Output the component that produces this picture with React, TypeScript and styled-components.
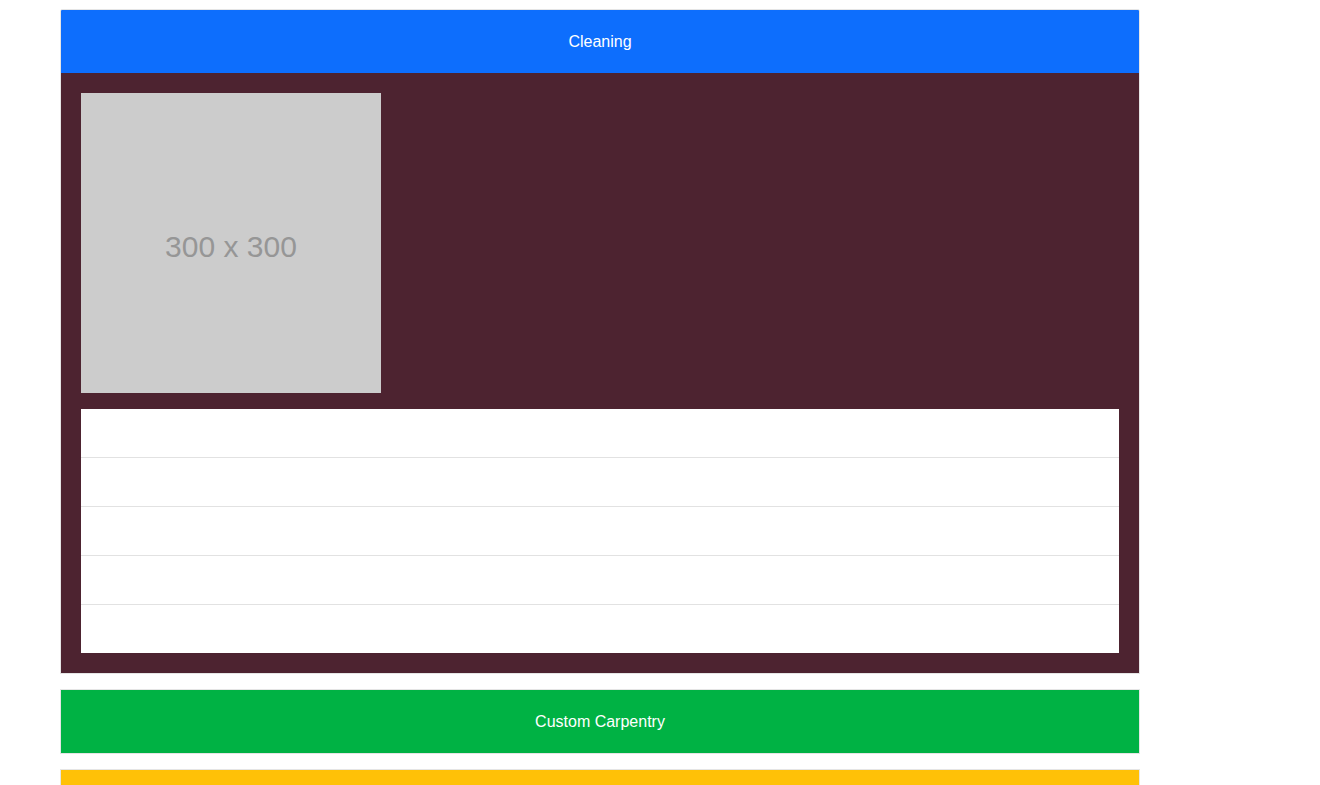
import React from "react";
import styled, { createGlobalStyle } from "styled-components";

const Global = createGlobalStyle`
  html, body { margin: 0; padding: 0; background: #fff; }
  body { font-family: "Liberation Sans", Arial, sans-serif; }
`;

const Page = styled.div`
  width: 1080px;
  padding: 9px 0 0 60px;
  display: flex;
  flex-direction: column;
  gap: 15px;
`;

const Card = styled.div<{ $rounded?: boolean }>`
  border: 1px solid rgba(0, 0, 0, 0.1);
  border-radius: ${(p) => (p.$rounded ? "2px 2px 0 0" : "0")};
  overflow: hidden;
  display: flex;
  flex-direction: column;
`;

const Header = styled.div<{ $bg: string }>`
  background: ${(p) => p.$bg};
  height: 62px;
  padding-top: 1px;
  display: flex;
  align-items: center;
  justify-content: center;
  color: #fff;
  font-size: 16px;
`;

const Body = styled.div`
  background: #4d2330;
  padding: 20px;
  display: flex;
  flex-direction: column;
  gap: 16px;
`;

const Placeholder = styled.div`
  width: 300px;
  height: 292px;
  padding-top: 8px;
  background: #cccccc;
  color: #969696;
  font-size: 30px;
  display: flex;
  align-items: center;
  justify-content: center;
`;

const List = styled.ul`
  list-style: none;
  margin: 0;
  padding: 0;
  background: #fff;
`;

const Row = styled.li`
  height: 48px;
  & + & {
    border-top: 1px solid #e2e2e2;
  }
`;

export default function App() {
  return (
    <>
      <Global />
      <Page>
        <Card $rounded>
          <Header $bg="#0d6efd">Cleaning</Header>
          <Body>
            <Placeholder>300 x 300</Placeholder>
            <List>
              {[0, 1, 2, 3, 4].map((i) => (
                <Row key={i} />
              ))}
            </List>
          </Body>
        </Card>
        <Card>
          <Header $bg="#00b244">Custom Carpentry</Header>
        </Card>
        <Card>
          <Header $bg="#ffc107" />
        </Card>
      </Page>
    </>
  );
}
